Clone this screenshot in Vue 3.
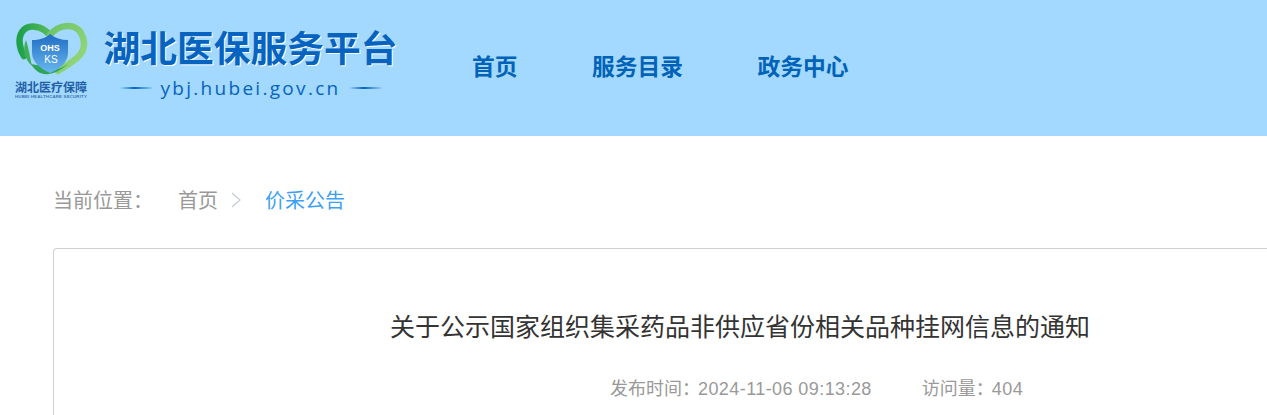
<script setup>
const navItems = ['首页', '服务目录', '政务中心']
</script>

<template>
  <div class="page">
    <header class="header">
      <div class="logo">
        <svg class="emblem" width="74" height="64" viewBox="0 0 74 64">
          <defs>
            <linearGradient id="hg" x1="0" y1="0" x2="1" y2="0">
              <stop offset="0" stop-color="#1fa04a" />
              <stop offset="1" stop-color="#57bb5c" />
            </linearGradient>
            <linearGradient id="hr" x1="0" y1="0" x2="1" y2="1">
              <stop offset="0" stop-color="#6cc568" />
              <stop offset="1" stop-color="#9ad87c" />
            </linearGradient>
            <linearGradient id="sg" x1="0" y1="0" x2="0" y2="1">
              <stop offset="0" stop-color="#1f6cc4" />
              <stop offset="1" stop-color="#6ab8ee" />
            </linearGradient>
          </defs>
          <path d="M36 15C28 6 14 3 8 12C4 18 5 28 10 36" fill="none" stroke="url(#hg)" stroke-width="6.5" stroke-linecap="round" />
          <path d="M36 15C44 5 60 2 67 13C72 22 71 31 63 38C57 43 51 47 44 51" fill="none" stroke="url(#hr)" stroke-width="6.5" stroke-linecap="round" />
          <path d="M12 20C8 29 11 40 18 46C16 38 15 29 12 20Z" fill="#3fb05a" />
          <path d="M17 44C24 57 38 58 54 44C45 50 41 50 37 47C42 46 44 44 46 42C38 44 30 47 17 44Z" fill="#2fa657" />
          <path d="M18 20C25 20 32 18 36 14C41 18 47 20 54 20V33C54 42 46 49 36 53C27 49 18 42 18 33Z" fill="url(#sg)" />
          <text x="36" y="31" class="shield-top">OHS</text>
          <text x="37" y="43" class="shield-bottom">KS</text>
        </svg>
        <div class="emblem-name">湖北医疗保障</div>
        <div class="emblem-en">HUBEI HEALTHCARE SECURITY</div>
      </div>
      <div class="brand">
        <div class="brand-title">湖北医保服务平台</div>
        <div class="brand-url">
          <span class="dash"></span>
          <span>ybj.hubei.gov.cn</span>
          <span class="dash"></span>
        </div>
      </div>
      <nav class="nav">
        <a v-for="item in navItems" :key="item" class="nav-item">{{ item }}</a>
      </nav>
    </header>

    <main class="main">
      <div class="crumbs">
        <span class="crumb-label">当前位置：</span>
        <span class="crumb-home">首页</span>
        <svg class="chevron" width="10" height="16" viewBox="0 0 10 16">
          <path d="M1 1L9 8L1 15" fill="none" stroke="#c4ccd6" stroke-width="1.2" />
        </svg>
        <span class="crumb-current">价采公告</span>
      </div>
      <article class="card">
        <h1 class="title">关于公示国家组织集采药品非供应省份相关品种挂网信息的通知</h1>
        <div class="meta">
          <span><span class="meta-label">发布时间：</span><span class="meta-value">2024-11-06 09:13:28</span></span>
          <span><span class="meta-label">访问量：</span><span class="meta-value">404</span></span>
        </div>
      </article>
    </main>
  </div>
</template>

<style>
html, body { margin: 0; overflow: hidden; background: #fff; }
</style>

<style scoped>
.page {
  height: 415px;
  overflow: hidden;
  font-family: "Noto Sans CJK SC", "Liberation Sans", sans-serif;
}
.header {
  height: 136px;
  background: #a3d8ff;
  display: flex;
  align-items: flex-start;
  box-sizing: border-box;
  padding: 20px 0 0 13px;
}
.logo {
  width: 76px;
  display: flex;
  flex-direction: column;
  align-items: center;
}
.emblem { display: block; }
.shield-top {
  font-family: "Liberation Sans", sans-serif;
  font-size: 9px;
  font-weight: 700;
  fill: #fff;
  text-anchor: middle;
}
.shield-bottom {
  font-family: "Liberation Sans", sans-serif;
  font-size: 10px;
  fill: #fff;
  text-anchor: middle;
}
.emblem-name {
  margin-top: -4px;
  font-size: 12px;
  line-height: 14px;
  font-weight: 700;
  color: #1f5fa8;
  white-space: nowrap;
}
.emblem-en {
  font-family: "Liberation Sans", sans-serif;
  font-size: 4.4px;
  line-height: 6px;
  font-weight: 700;
  color: #3a74b5;
  white-space: nowrap;
  letter-spacing: 0.15px;
}
.brand {
  margin-left: 14px;
  width: 295px;
  display: flex;
  flex-direction: column;
  align-items: center;
}
.brand-title {
  font-size: 36.75px;
  line-height: 52px;
  font-weight: 700;
  color: #0663c0;
  text-shadow: 1px 1px 0 #fff;
  white-space: nowrap;
}
.brand-url {
  margin-top: 3px;
  display: flex;
  align-items: center;
  gap: 8px;
  font-family: "Open Sans", "Liberation Sans", sans-serif;
  font-size: 19px;
  font-weight: 500;
  line-height: 26px;
  letter-spacing: 2.3px;
  color: #0663c0;
}
.dash {
  width: 32px;
  height: 2px;
  background: linear-gradient(90deg, transparent, #0663c0 45%, #8cc8f5);
}
.nav {
  margin-left: 74px;
  padding-top: 28px;
  display: flex;
  gap: 74.5px;
}
.nav-item {
  font-size: 22.75px;
  line-height: 36px;
  font-weight: 700;
  color: #0063b8;
}
.main { padding: 0 0 0 53px; }
.crumbs {
  height: 112px;
  box-sizing: border-box;
  padding-top: 49px;
  display: flex;
  align-items: flex-start;
  font-size: 20px;
  line-height: 30px;
  color: #999;
  white-space: nowrap;
}
.crumb-label { width: 125px; }
.chevron { margin: 7px 0 0 13px; }
.crumb-current { margin-left: 24px; color: #3d9ff5; }
.card {
  height: 300px;
  border: 1px solid #d0d0d0;
  border-right: none;
  border-radius: 4px 0 0 0;
  padding-top: 54px;
  box-sizing: content-box;
}
.title {
  margin: 0;
  padding-left: 336px;
  font-size: 25px;
  line-height: 44px;
  font-weight: 400;
  color: #333;
  white-space: nowrap;
}
.meta {
  margin-top: 27px;
  padding-left: 556px;
  display: flex;
  gap: 50px;
  font-size: 18px;
  line-height: 26px;
  color: #999;
  white-space: nowrap;
}
.meta-label { margin-right: -2px; }
.meta-value {
  font-family: "Liberation Sans", sans-serif;
  letter-spacing: 0.42px;
}
</style>
